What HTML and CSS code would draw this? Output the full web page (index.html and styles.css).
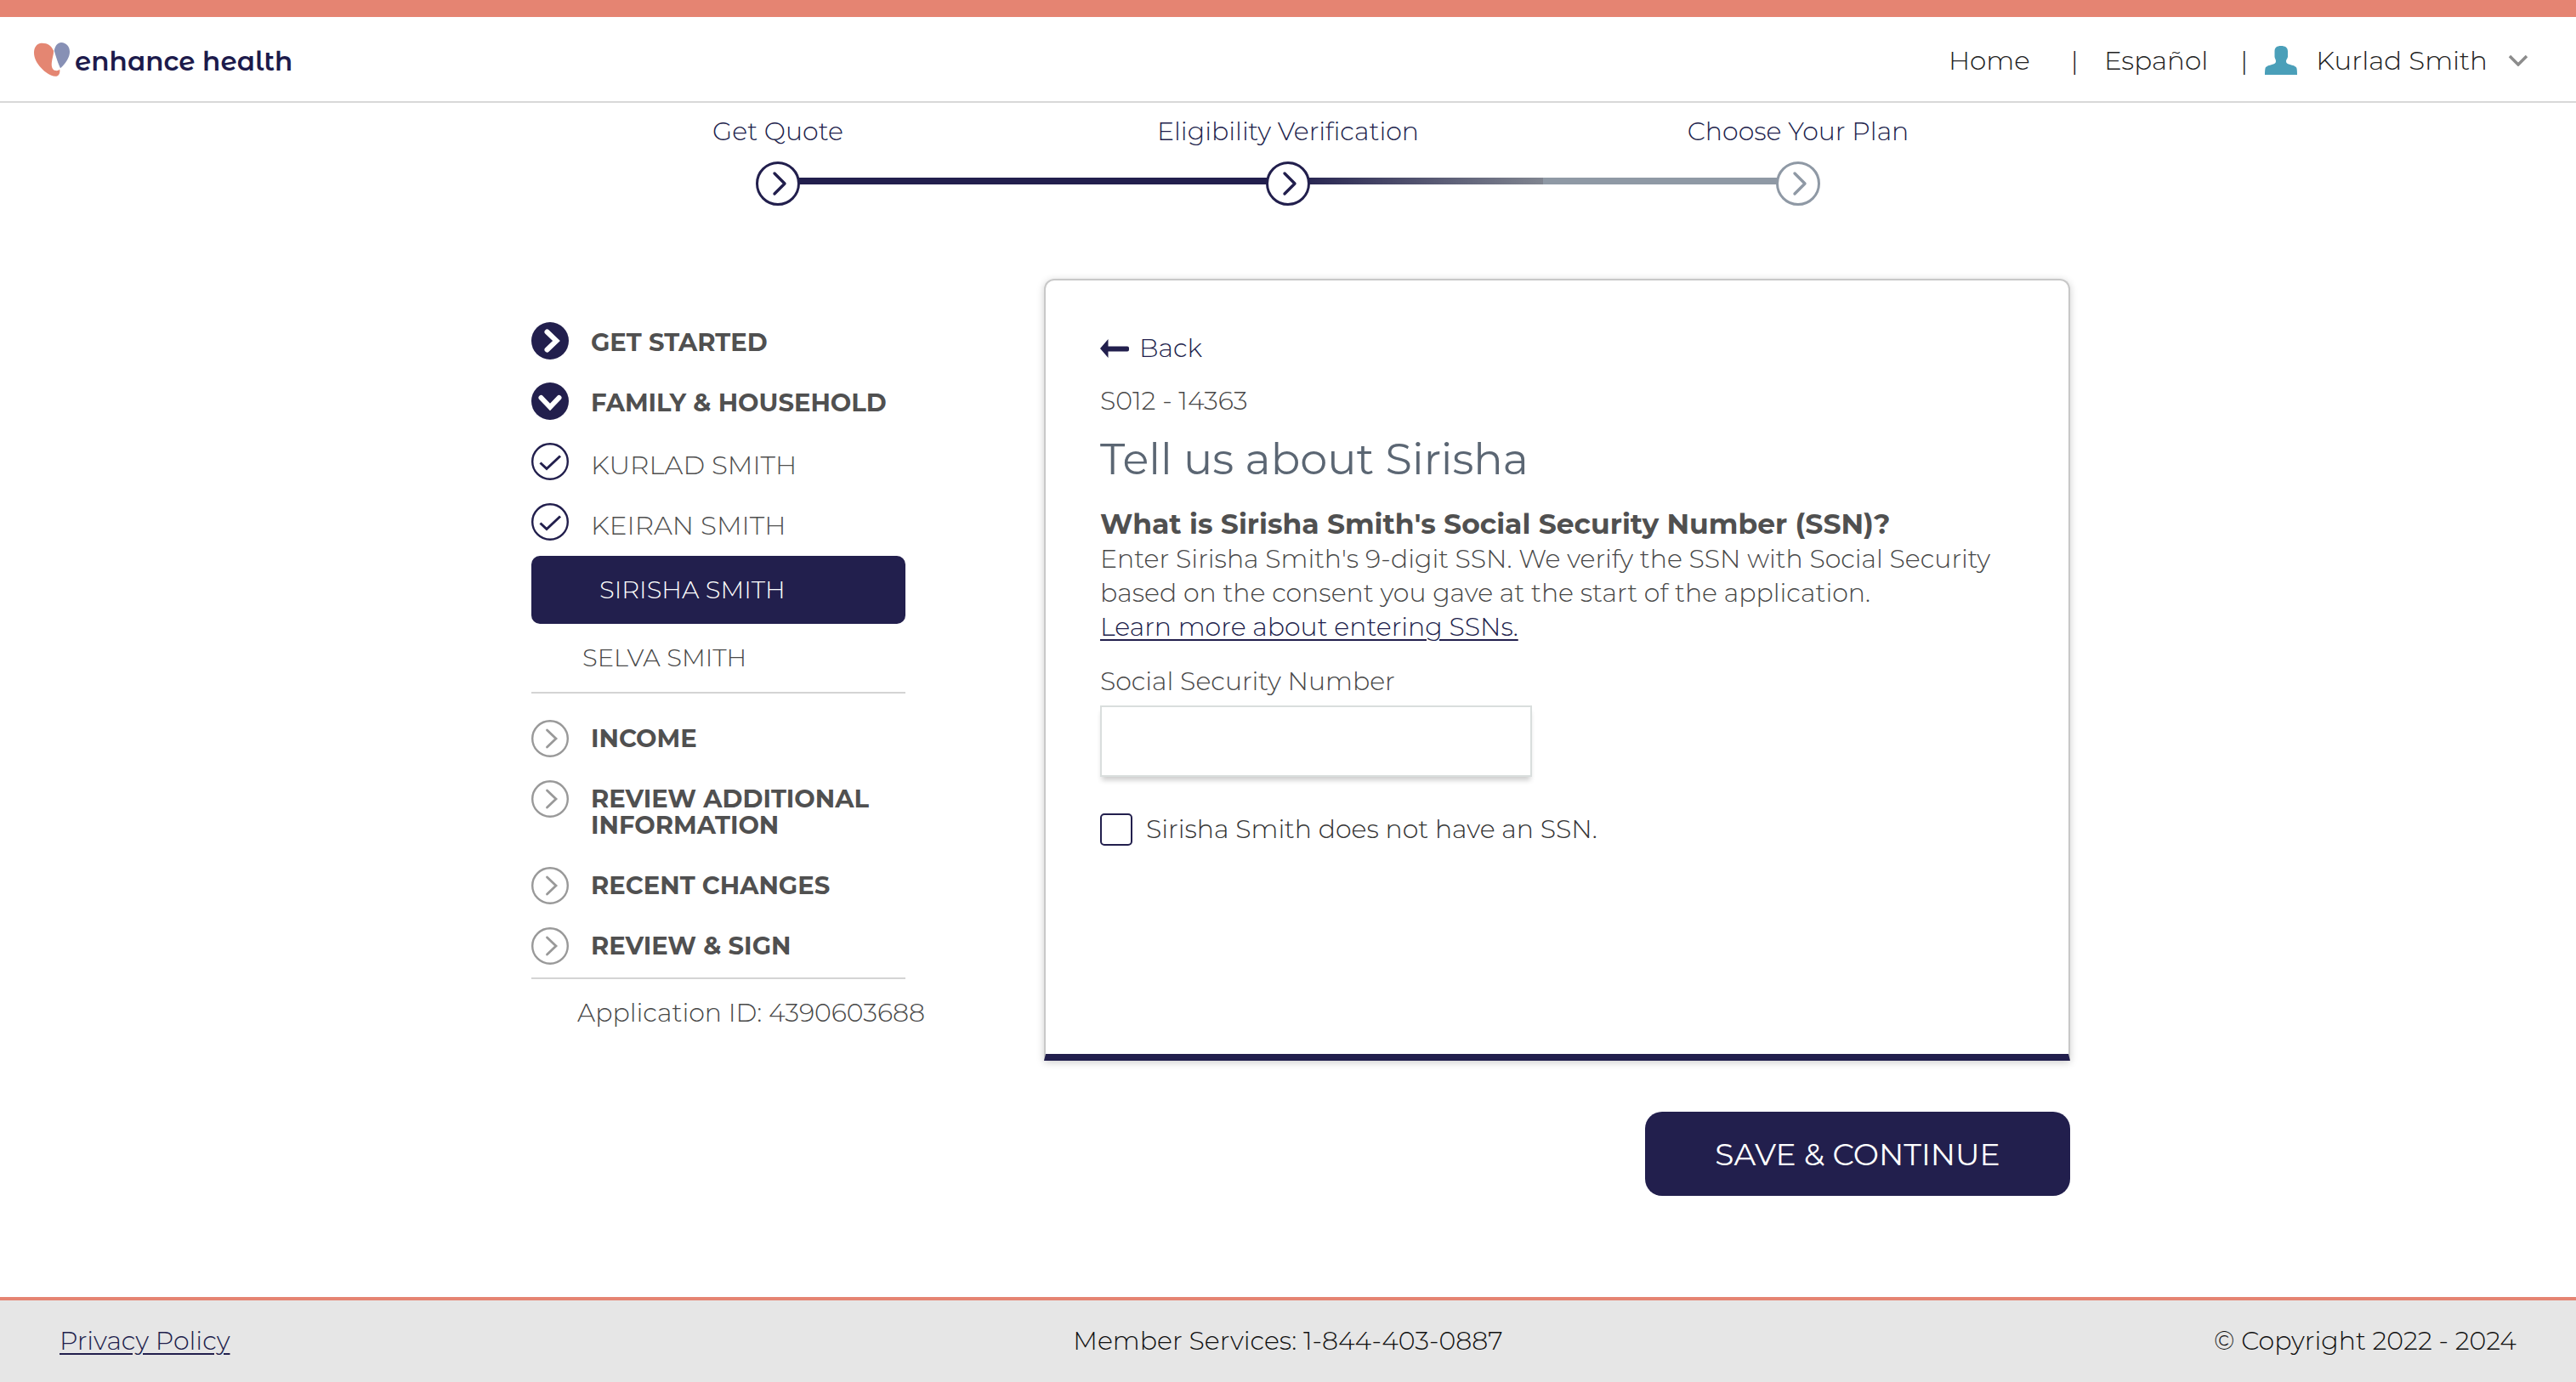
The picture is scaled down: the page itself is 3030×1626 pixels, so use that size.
FILE: index.html
```html
<!DOCTYPE html>
<html lang="en">
<head>
<meta charset="utf-8">
<meta name="viewport" content="width=device-width, initial-scale=1">
<title>Enhance Health - Eligibility Verification</title>
<link rel="stylesheet" href="styles.css">
</head>
<body>
<svg class="sprite" aria-hidden="true">
  <symbol id="step" viewBox="0 0 52 52"><circle cx="26" cy="26" r="24.5" fill="#fff" stroke="currentColor" stroke-width="3"/><path d="M22 14l12 12-12 12" fill="none" stroke="currentColor" stroke-width="3.4" stroke-linecap="round" stroke-linejoin="round"/></symbol>
  <symbol id="solid" viewBox="0 0 44 44"><circle cx="22" cy="22" r="22" fill="currentColor"/><path d="M18.500 11.500l11 10.500-11 10.500" fill="none" stroke="#fff" stroke-width="6" stroke-linecap="round" stroke-linejoin="miter"/></symbol>
  <symbol id="open" viewBox="0 0 44 44"><circle cx="22" cy="22" r="22" fill="currentColor"/><path d="M11.500 18l10.500 11 10.500-11" fill="none" stroke="#fff" stroke-width="6" stroke-linecap="round" stroke-linejoin="miter"/></symbol>
  <symbol id="done" viewBox="0 0 44 44"><circle cx="22" cy="22" r="20.800" fill="none" stroke="currentColor" stroke-width="2.400"/><path d="M10.500 23.500l7.500 7L34 15.500" fill="none" stroke="currentColor" stroke-width="3"/></symbol>
  <symbol id="todo" viewBox="0 0 44 44"><circle cx="22" cy="22" r="20.800" fill="none" stroke="currentColor" stroke-width="2.400"/><path d="M18.500 12l10.500 10-10.500 10" fill="none" stroke="currentColor" stroke-width="2.800" stroke-linecap="round"/></symbol>
</svg>

<header class="header">
  <a class="brand" href="#">
    <svg class="brand-mark" viewBox="0 0 42 40" aria-hidden="true">
      <path fill="#e48672" d="M8 .7C3 1.500 0 6 0 12c0 6 3 12 8 17.500C13 35 19 39.500 25 39.800c4 .1 6-3.300 5.200-8.300-1.200 1.500-3 2-5 1.600-3.200-.6-4.900-4.100-4.400-9.100.5-5 2.200-9.500 2.400-14C20 3 16 .3 8 .7z"/>
      <path fill="#8790b5" d="M32 0c-4 0-7 3.500-8.200 9.500 1 4 1.700 6 3 10 1.500 4.500 2.900 8 4.200 10.800C38 24 42 17 42 11 42 4.500 38 .3 32 0z"/>
    </svg>
    <span>enhance health</span>
  </a>
  <nav class="nav">
    <a class="nav-home" href="#">Home</a>
    <span class="bar">|</span>
    <a class="nav-lang" href="#">Español</a>
    <span class="bar">|</span>
    <button class="account" type="button">
      <svg class="person" viewBox="0 0 38 34" aria-hidden="true"><path fill="#4a9fb9" d="M19 0c5 0 8 2 8 6.500v6c0 2.500-2 3-2 5.500 0 2.500 1.500 3 4 3.800 4 1.200 8 2.200 8.500 4.700.4 2 .5 4 .5 7.500H0c0-3.500.1-5.500.5-7.500.5-2.500 4.500-3.500 8.500-4.700 2.500-.8 4-1.300 4-3.800 0-2.500-1.500-3-1.500-5.500v-6C11.500 2 14 0 19 0z"/></svg>
      <span>Kurlad Smith</span>
      <svg class="caret" viewBox="0 0 24 14" aria-hidden="true"><path d="M2 2l10 10L22 2" fill="none" stroke="#8c8c8c" stroke-width="3.500"/></svg>
    </button>
  </nav>
</header>

<ol class="steps">
  <li class="step"><span>Get Quote</span><svg><use href="#step"/></svg></li>
  <li class="step active"><span>Eligibility Verification</span><svg><use href="#step"/></svg></li>
  <li class="step pending"><span>Choose Your Plan</span><svg><use href="#step"/></svg></li>
</ol>

<main class="main">
  <aside class="side">
    <ul class="menu">
      <li><svg><use href="#solid"/></svg><span>GET STARTED</span></li>
      <li><svg><use href="#open"/></svg><span>FAMILY &amp; HOUSEHOLD</span></li>
      <li class="member"><svg><use href="#done"/></svg><span>KURLAD SMITH</span></li>
      <li class="member"><svg><use href="#done"/></svg><span>KEIRAN SMITH</span></li>
    </ul>
    <p class="current">SIRISHA SMITH</p>
    <p class="next">SELVA SMITH</p>
    <ul class="menu todo">
      <li><svg><use href="#todo"/></svg><span>INCOME</span></li>
      <li><svg><use href="#todo"/></svg><span>REVIEW ADDITIONAL INFORMATION</span></li>
      <li><svg><use href="#todo"/></svg><span>RECENT CHANGES</span></li>
      <li><svg><use href="#todo"/></svg><span>REVIEW &amp; SIGN</span></li>
    </ul>
    <p class="app-id">Application ID: 4390603688</p>
  </aside>

  <form class="form">
    <section class="card">
      <a class="back" href="#"><svg viewBox="0 0 34 22" aria-hidden="true"><path fill="currentColor" d="M0 11L9.500 0v8.500H32a2 2 0 0 1 2 2v2a2 2 0 0 1-2 2H9.500V22z"/></svg><span>Back</span></a>
      <p class="code">S012 - 14363</p>
      <h1>Tell us about Sirisha</h1>
      <h2>What is Sirisha Smith's Social Security Number (SSN)?</h2>
      <p class="help">Enter Sirisha Smith's 9-digit SSN. We verify the SSN with Social Security<br>based on the consent you gave at the start of the application.<br><a href="#">Learn more about entering SSNs.</a></p>
      <label class="field-label" for="ssn">Social Security Number</label>
      <input class="field" id="ssn" type="text">
      <div class="check"><input id="no-ssn" type="checkbox"><label for="no-ssn">Sirisha Smith does not have an SSN.</label></div>
    </section>
    <button class="save" type="submit">SAVE &amp; CONTINUE</button>
  </form>
</main>

<footer class="footer">
  <a href="#">Privacy Policy</a>
  <span>Member Services: 1-844-403-0887</span>
  <span class="copy">© Copyright 2022 - 2024</span>
</footer>
</body>
</html>
```

FILE: styles.css
```css
:root {
  --navy: #221f4d;
  --coral: #e58472;
  --text: #505050;
  --rule: #d4d4d4;
  --slate: #8f99a5;
}

* { box-sizing: border-box; }

body {
  margin: 0;
  min-height: 100vh;
  display: flex;
  flex-direction: column;
  background: #fff;
  color: #484848;
  font: 300 30px/40px Montserrat, Inter, sans-serif;
}

p, h1, h2, ol, ul { margin: 0; padding: 0; list-style: none; }
button, input { font: inherit; }
.sprite { position: absolute; width: 0; height: 0; }

.header {
  display: flex;
  justify-content: space-between;
  align-items: center;
  height: 121px;
  padding: 0 56px 0 40px;
  border-top: 20px solid var(--coral);
  border-bottom: 2px solid #d8d8d8;
}
.brand {
  display: flex;
  align-items: center;
  gap: 6px;
  color: #1c1a4b;
  font-family: "Montserrat Alternates", Montserrat, Inter, sans-serif;
  font-size: 31px;
  font-weight: 600;
  text-decoration: none;
}
.brand span { padding-top: 4px; }
.brand-mark { width: 42px; height: 40px; }
.nav { display: flex; align-items: center; padding-top: 2px; color: #222; font-size: 31px; }
.nav a { color: inherit; text-decoration: none; }
.nav-home { margin-right: 48px; }
.nav-lang { margin: 0 38px 0 30px; }
.account {
  display: flex;
  align-items: center;
  margin-left: 20px;
  padding: 0;
  border: 0;
  background: none;
  color: inherit;
}
.person { width: 38px; height: 34px; margin-right: 22px; }
.caret { width: 24px; height: 14px; margin-left: 24px; }

.steps {
  display: grid;
  grid-template-columns: repeat(3, 600px);
  justify-content: center;
  padding-top: 14px;
  color: var(--navy);
}
.step {
  display: grid;
  justify-items: center;
  row-gap: 15px;
  background: linear-gradient(var(--navy), var(--navy)) right 74px / 300px 8px no-repeat;
}
.step svg { width: 52px; height: 52px; }
.step.active {
  background:
    linear-gradient(var(--navy), var(--navy)) left 74px / 300px 8px no-repeat,
    linear-gradient(90deg, var(--navy), #808590) right 74px / 300px 8px no-repeat;
}
.step.pending { background: linear-gradient(var(--slate), var(--slate)) left 74px / 300px 8px no-repeat; }
.step.pending svg { color: var(--slate); }

.main {
  display: grid;
  grid-template-columns: 440px 1207px;
  justify-content: center;
  column-gap: 163px;
  padding: 86px 0 119px 30px;
}

.side { padding-top: 51px; }
.menu { display: grid; row-gap: 27px; color: var(--text); font-size: 29px; font-weight: 700; }
.menu li { display: flex; align-items: flex-start; gap: 26px; line-height: 31px; }
.menu svg { flex: none; width: 44px; height: 44px; color: var(--navy); }
.menu span { padding: 8px 0 5px; }
.menu .member { font-size: 31px; font-weight: 300; }
.menu .member span { padding: 11px 0 2px; }
.current, .next { font-size: 29px; }
.current {
  margin-top: 18px;
  padding: 20px 80px;
  border-radius: 10px;
  background: var(--navy);
  color: #fff;
}
.next { padding: 20px 60px; border-bottom: 2px solid var(--rule); }
.todo { padding: 31px 0 15px; border-bottom: 2px solid var(--rule); }
.todo svg { color: #999; }
.todo span { padding: 6px 0 7px; }
.app-id { padding: 20px 0 0 54px; white-space: nowrap; }

.card {
  min-height: 920px;
  padding: 60px 64px;
  border: 2px solid #c8c8c8;
  border-bottom: 8px solid var(--navy);
  border-radius: 12px 12px 0 0;
  box-shadow: 0 2px 10px rgba(0, 0, 0, .2);
}
.back { display: flex; align-items: center; gap: 12px; color: var(--navy); text-decoration: none; }
.back svg { width: 34px; height: 22px; }
.code { margin-top: 22px; }
h1 { margin-top: 18px; color: #5b6673; font-size: 51px; font-weight: 400; line-height: 60px; }
h2 { margin-top: 26px; padding-bottom: 2px; color: var(--text); font-size: 33px; font-weight: 700; line-height: 40px; }
.help a { color: var(--navy); text-underline-offset: 4px; text-decoration-thickness: 2px; }
.field-label { display: block; margin-top: 24px; }
.field {
  display: block;
  width: 508px;
  height: 84px;
  margin-top: 8px;
  padding: 0 20px;
  border: 2px solid #d9dedd;
  background: #fff;
  box-shadow: 0 6px 6px -2px rgba(0, 0, 0, .2);
}
.check { display: flex; align-items: center; gap: 16px; margin-top: 42px; color: #333; }
.check input {
  appearance: none;
  width: 38px;
  height: 38px;
  margin: 0;
  border: 2px solid var(--navy);
  border-radius: 5px;
}
.save {
  display: block;
  width: 500px;
  height: 99px;
  margin: 60px 0 0 auto;
  border: 0;
  border-radius: 20px;
  background: var(--navy);
  color: #fff;
  font-size: 36px;
  font-weight: 400;
}

.footer {
  display: grid;
  grid-template-columns: 1fr auto 1fr;
  align-items: center;
  margin-top: auto;
  padding: 28px 70px;
  border-top: 4px solid var(--coral);
  background: #e6e6e6;
  color: #111;
}
.footer a { justify-self: start; color: var(--navy); text-underline-offset: 4px; text-decoration-thickness: 2px; }
.copy { justify-self: end; }
```
